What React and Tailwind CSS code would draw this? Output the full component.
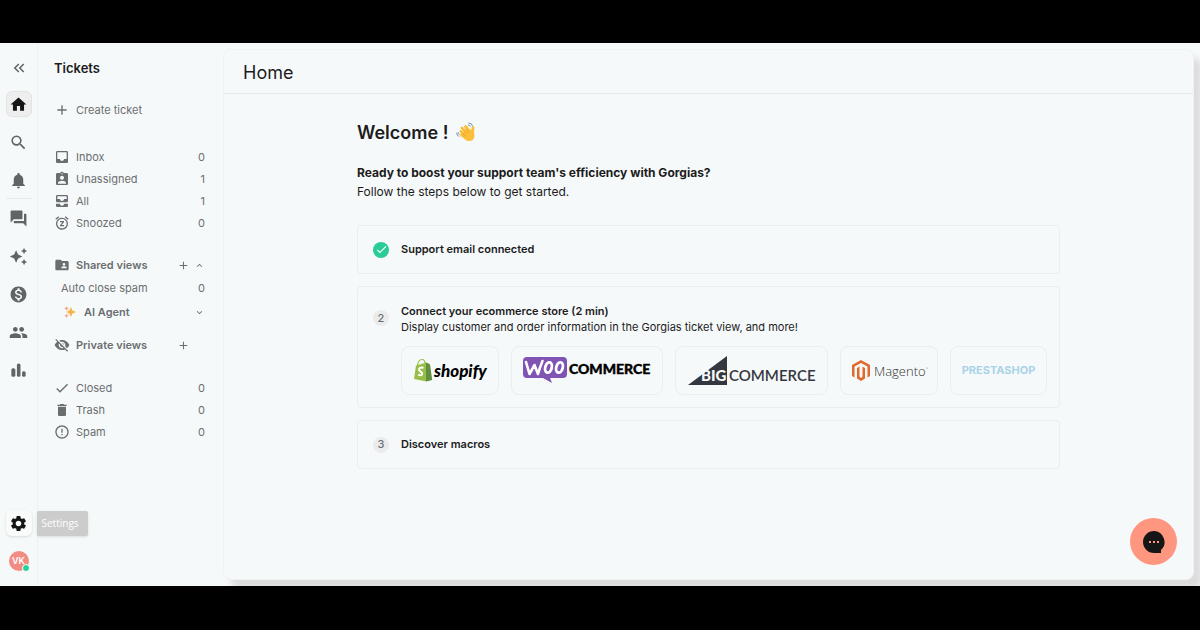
import React from "react";
import {
  MdHome, MdSearch, MdNotifications, MdForum, MdAutoAwesome, MdMonetizationOn, MdPeople,
  MdAssignmentInd, MdAllInbox, MdSnooze, MdFolderShared, MdVisibilityOff,
  MdDone, MdDelete, MdErrorOutline, MdSettings, MdKeyboardDoubleArrowLeft, MdAdd,
  MdExpandLess, MdExpandMore, MdInbox,
} from "react-icons/md";

const Bars = ({ size }) => (
  <svg width={size} height={size} viewBox="0 0 24 24" fill="currentColor">
    <rect x="3" y="9" width="5" height="11" rx="2" />
    <rect x="10" y="3" width="4.500" height="17" rx="2" />
    <rect x="16.500" y="13" width="4.500" height="7" rx="2" />
  </svg>
);

const navPrincipal = [
  { label: "Home", Icon: MdHome, active: true },
  { label: "Search", Icon: MdSearch },
  { label: "Notifications", Icon: MdNotifications },
  { label: "Tickets", Icon: MdForum, divider: true },
  { label: "Automate", Icon: MdAutoAwesome },
  { label: "Revenue", Icon: MdMonetizationOn },
  { label: "Customers", Icon: MdPeople },
  { label: "Statistics", Icon: Bars },
];

const systemViews = [
  { label: "Inbox", Icon: MdInbox, count: 0 },
  { label: "Unassigned", Icon: MdAssignmentInd, count: 1 },
  { label: "All", Icon: MdAllInbox, count: 1 },
  { label: "Snoozed", Icon: MdSnooze, count: 0 },
];

const otherViews = [
  { label: "Closed", Icon: MdDone, count: 0 },
  { label: "Trash", Icon: MdDelete, count: 0 },
  { label: "Spam", Icon: MdErrorOutline, count: 0 },
];

function ViewList({ views }) {
  return (
    <ul>
      {views.map(({ label, Icon, count }) => (
        <li key={label}>
          <a href="#" className="flex h-[22px] items-center pl-4">
            <Icon size={16} />
            <span className="ml-[6px] flex-1">{label}</span>
            <span>{count}</span>
          </a>
        </li>
      ))}
    </ul>
  );
}

function Rail() {
  return (
    <nav className="flex w-[38px] shrink-0 flex-col items-center border-r border-[#eff1f2] pt-3 pb-[15px] text-[#606465]">
      <button aria-label="Collapse" className="mb-[10px] flex size-[26px] items-center justify-center">
        <MdKeyboardDoubleArrowLeft size={18} />
      </button>
      <ul className="flex flex-col gap-3">
        {navPrincipal.map(({ label, Icon, active, divider }) => (
          <li key={label} className="relative">
            {divider && <span className="absolute -top-[7px] left-0 h-px w-[26px] bg-[#e9ebec]" />}
            <a
              href="#"
              aria-label={label}
              className={active
                ? "flex size-[26px] items-center justify-center rounded-md border border-[#e2e3e3] bg-[#eeeeee] text-[#161616]"
                : "flex size-[26px] items-center justify-center"}
            >
              <Icon size={19} />
            </a>
          </li>
        ))}
      </ul>
      <div className="relative mt-auto">
        <button aria-label="Settings" className="flex size-[26px] items-center justify-center rounded-md bg-[#f9fbfb] text-[#161616] shadow-sm">
          <MdSettings size={19} />
        </button>
        <span role="tooltip" className="absolute top-px left-[31px] z-10 flex h-[25px] w-[51px] items-center rounded-xs bg-[#cccccc] pl-[5px] font-['Open_Sans',sans-serif] text-[10px] text-white shadow-sm">
          Settings
        </span>
      </div>
      <button className="relative mt-[15px] flex size-[20px] items-center justify-center rounded-full bg-[#f28b82] text-[9px] font-semibold text-white">
        VK
        <span className="absolute -right-px -bottom-px size-[8px] rounded-full border border-white bg-[#24d09a]" />
      </button>
    </nav>
  );
}

const Sparkles = () => (
  <svg width="12" height="12" viewBox="0 0 12 12" aria-hidden="true">
    <path d="M7 1l1.200 3.300L12 6 8.200 7.700 7 11 5.600 7.700 2.500 6l3.100-1.700z" fill="#f9b445" />
    <path d="M2.500 0l.8 1.700 1.700.8-1.700.8L2.500 5l-.8-1.700L0 2.500l1.700-.8z" fill="#f7a688" />
    <path d="M2.500 7.500l.7 1.500 1.500.7-1.500.8-.7 1.500-.7-1.500L.3 9.700 1.800 9z" fill="#f7a688" />
  </svg>
);

function Sidebar() {
  return (
    <aside className="w-[185px] shrink-0 pr-[18px] pt-4 text-[11px] text-[#6b6e70]">
      <h2 className="pl-4 text-[13px] leading-[18px] font-semibold text-[#1c1c1c]">Tickets</h2>
      <button className="mt-[23px] flex h-[20px] items-center pl-4">
        <MdAdd size={16} />
        <span className="ml-[6px]">Create ticket</span>
      </button>
      <div className="mt-[26px]">
        <ViewList views={systemViews} />
      </div>
      <div className="mt-5 flex h-[22px] items-center pl-4 font-semibold">
        <MdFolderShared size={16} />
        <span className="ml-[6px] flex-1">Shared views</span>
        <button aria-label="Add shared view"><MdAdd size={13} /></button>
        <button aria-label="Collapse shared views" className="ml-1"><MdExpandLess size={11} /></button>
      </div>
      <a href="#" className="flex h-[24px] items-center pl-[23px]">
        <span className="flex-1">Auto close spam</span>
        <span>0</span>
      </a>
      <div className="flex h-[24px] items-center pl-[26px] font-semibold">
        <Sparkles />
        <span className="ml-2 flex-1">AI Agent</span>
        <button aria-label="Expand AI Agent"><MdExpandMore size={11} /></button>
      </div>
      <div className="mt-[10px] flex h-[22px] items-center pl-4 font-semibold">
        <MdVisibilityOff size={16} />
        <span className="ml-[6px] flex-1">Private views</span>
        <button aria-label="Add private view" className="mr-[15px]"><MdAdd size={13} /></button>
      </div>
      <div className="mt-[21px]">
        <ViewList views={otherViews} />
      </div>
    </aside>
  );
}

// Logos de las plataformas
function Shopify() {
  return (
    <svg viewBox="-1 0 76 26" width="76" height="26" role="img" aria-label="Shopify">
      <path d="M4.500 7.500c.5-3.500 2.500-6 4.500-6s3 2 3 4" fill="none" stroke="#95bf47" strokeWidth="1.200" />
      <path d="M3 7.500L13.500 4.500V23.500L1 21z" fill="#95bf47" />
      <path d="M13 4.500l2 .7 2 1.300 2.200 15.500-6.200 1.500z" fill="#5e8e3e" />
      <path d="M10.500 10c-2-1-4.500-.4-4.500 1.600s3.200 2 3.200 4-2.200 2.200-4 .9" fill="none" stroke="#fff" strokeWidth="2" />
      <text x="21" y="19" fontFamily="Lato, sans-serif" fontSize="17" fontWeight="900" fontStyle="italic">shopify</text>
    </svg>
  );
}

function WooCommerce() {
  return (
    <svg viewBox="-2 0 132 30" width="132" height="30" role="img" aria-label="WooCommerce">
      <path d="M4 1h36q4 0 4 4v13q0 4-4 4H27l2 5-9-5H4q-4 0-4-4V5q0-4 4-4z" fill="#7f54b3" />
      <path d="M3 6l3.500 12 5-9 3.500 9q2-7 4.500-13" fill="none" stroke="#fff" strokeWidth="2.600" strokeLinecap="round" strokeLinejoin="round" />
      <ellipse cx="25.500" cy="11.500" rx="3.200" ry="5.300" transform="rotate(15 25.500 11.500)" fill="none" stroke="#fff" strokeWidth="2.800" />
      <ellipse cx="36.500" cy="11.500" rx="3.200" ry="5.300" transform="rotate(15 36.500 11.500)" fill="none" stroke="#fff" strokeWidth="2.800" />
      <text x="46" y="18" fontFamily="Lato, sans-serif" fontSize="14" fontWeight="900" stroke="#000" strokeWidth=".4">COMMERCE</text>
    </svg>
  );
}

function BigCommerce() {
  return (
    <svg viewBox="-3 0 134 30" width="134" height="30" role="img" aria-label="BigCommerce">
      <path d="M0 29L39 0v29z" fill="#34373f" />
      <text x="13" y="25" fontFamily="Lato" fontSize="15" fontWeight="900" fill="#f6f9fa">BIG</text>
      <text x="41" y="25" fontFamily="Lato" fontSize="15" fontWeight="600" fill="#34373f">COMMERCE</text>
    </svg>
  );
}

function Magento() {
  return (
    <svg viewBox="-3 0 80 22" width="80" height="22" role="img" aria-label="Magento">
      <path d="M9 0l9 5v11l-2.500 1.500V6.500L9 3 2.500 6.500v11L0 16V5z" fill="#e06a2b" />
      <path d="M5 8l2.500-1.500v10L9 18l1.500-1.500v-10L13 8v10.500L9 21l-4-2.500z" fill="#e06a2b" />
      <text x="22" y="16" fontFamily="Open Sans" fontSize="13" fontWeight="300" fill="#333">Magento</text>
      <circle cx="75" cy="8" r=".6" fill="#777" />
    </svg>
  );
}

function PrestaShop() {
  return <span className="text-[11px] font-bold text-[#a9d3e8]">PRESTASHOP</span>;
}

const stores = [
  { name: "Shopify", Logo: Shopify, className: "w-[98px]" },
  { name: "WooCommerce", Logo: WooCommerce, className: "w-[152px]" },
  { name: "BigCommerce", Logo: BigCommerce, className: "w-[153px]" },
  { name: "Magento", Logo: Magento, className: "w-[98px]" },
  { name: "PrestaShop", Logo: PrestaShop, className: "w-[97px]" },
];

function Wave() {
  return (
    <svg width="20" height="20" viewBox="0 0 20 20" aria-hidden="true">
      <g stroke="#fcbf3a" strokeWidth="2.800" strokeLinecap="round">
        <path d="M5.500 13l5 3M4.800 9.500l6 5M6 6l7 7M9.500 4.500l5 6" />
        <path d="M17 5.500l-.5 6" />
      </g>
      <path d="M8 9l6-2 4 3q2 9-5 9-4 0-7-5z" fill="#fcbf3a" />
      <path d="M6.500 11.500l3.500 3M7.500 8l4 4M9.500 6.500l4 4" stroke="#e99b22" strokeWidth=".8" fill="none" />
      <path d="M.8 10.500q-.5 3 2.500 4M2.500 10.500q-.3 1.500 1 2M12.500 1q3.500 0 4 3M12 3q2 0 2.200 1.500" stroke="#6c93ab" fill="none" />
    </svg>
  );
}

function Home() {
  return (
    <main className="relative mt-[6px] mr-[6px] mb-[6px] min-w-0 flex-1 rounded-lg border border-[#f0f2f3] bg-[#f6f9fa] text-[#1c1c1c] shadow-[8px_9px_6px_#dddddd]">
      <header className="flex h-[44px] items-center border-b border-[#e8eaeb] pt-[2px] pl-[19px]">
        <h1 className="text-[18px]">Home</h1>
      </header>
      <div className="mx-[133px] pt-6">
        <h2 className="flex h-[28px] items-center gap-2 text-[18px] font-semibold">Welcome ! <Wave /></h2>
        <p className="mt-[17px] text-[12px] leading-[19px] font-bold">Ready to boost your support team's efficiency with Gorgias?</p>
        <p className="text-[12px] leading-[19px]">Follow the steps below to get started.</p>

        <ol className="mt-6 flex flex-col gap-3 text-[11px]">
          <li className="flex h-[49px] items-center rounded-sm border border-[#ebedee] pl-[15px] font-semibold">
            <span className="flex size-4 items-center justify-center rounded-full bg-[#29cc97] text-white"><MdDone size={13} /></span>
            <span className="ml-3">Support email connected</span>
          </li>
          <li className="flex rounded-sm border border-[#ebedee] pt-4 pr-3 pb-3 pl-[15px]">
            <span className="mt-[7px] flex size-4 shrink-0 items-center justify-center rounded-full bg-[#ebebeb] font-medium text-[#6b6e70]">2</span>
            <div className="ml-3 flex-1">
              <h3 className="leading-4 font-semibold">Connect your ecommerce store (2 min)</h3>
              <p className="leading-4">Display customer and order information in the Gorgias ticket view, and more!</p>
              <div className="mt-[11px] flex gap-3">
                {stores.map(({ name, Logo, className }) => (
                  <button key={name} aria-label={name} className={`flex h-[49px] shrink-0 items-center justify-center rounded-lg border border-[#ebedee] ${className}`}>
                    <Logo />
                  </button>
                ))}
              </div>
            </div>
          </li>
          <li className="flex h-[49px] items-center rounded-sm border border-[#ebedee] pl-[15px] font-semibold">
            <span className="flex size-4 items-center justify-center rounded-full bg-[#ebebeb] font-medium text-[#6b6e70]">3</span>
            <span className="ml-3">Discover macros</span>
          </li>
        </ol>
      </div>
      <button aria-label="Open chat" className="absolute right-4 bottom-[14px] flex size-[47px] items-center justify-center rounded-full bg-[#ff9780]">
        <svg width="22" height="22" viewBox="0 0 22 22">
          <path d="M11 0a11 11 0 1 0 0 22h7v-3A11 11 0 0 0 11 0z" fill="#161616" />
          <path d="M6 10h2v2H6zM10 10h2v2h-2zM14 10h2v2h-2z" fill="#ff9780" />
        </svg>
      </button>
    </main>
  );
}

export default function App() {
  return (
    <div className="flex h-screen flex-col bg-black pt-[43px] pb-[44px] font-[Inter,sans-serif]">
      <div className="flex flex-1 overflow-hidden bg-[#f6f9fa]">
        <Rail />
        <Sidebar />
        <Home />
      </div>
    </div>
  );
}
